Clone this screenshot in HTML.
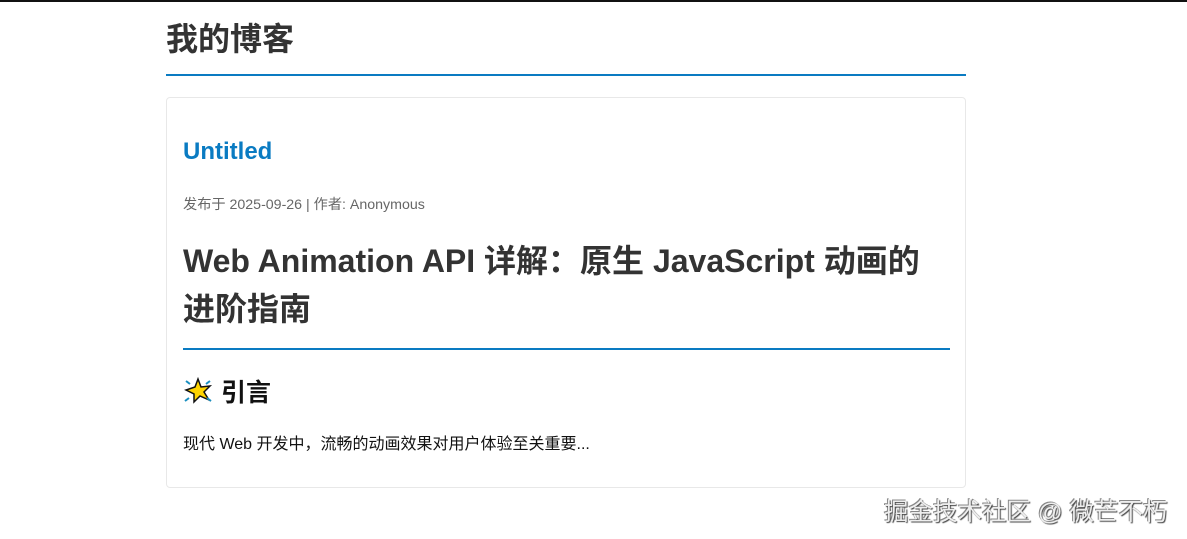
<!DOCTYPE html>
<html><head><meta charset="utf-8"><style>
body{margin:0;width:1187px;height:539px;background:#fff;font-family:"Liberation Sans","Noto Sans CJK SC",sans-serif;position:relative;overflow:hidden;border-top:2px solid #111;box-sizing:border-box}
.wrap{position:absolute;left:166px;top:0;width:800px}
h1{margin:0;position:absolute;top:17px;left:0;font-size:32px;font-weight:bold;color:#333;line-height:40px}
.line{position:absolute;top:72px;left:0;width:800px;height:2px;background:#0a7bc2}
.card{position:absolute;top:95px;left:0;width:798px;height:389px;border:1px solid #e8e8e8;border-radius:4px}
.t{position:absolute;left:16px;top:40px;font-size:24px;font-weight:bold;color:#0a7bc2}
.m{position:absolute;left:16px;top:96px;font-size:14.2px;color:#666}
.h{position:absolute;left:16px;top:139px;width:750px;font-size:32px;font-weight:bold;color:#333;line-height:48px}
.l2{position:absolute;left:16px;top:250px;width:767px;height:2px;background:#0a7bc2}
.s{position:absolute;left:16px;top:275px;font-size:25px;font-weight:bold;color:#111}
.p{position:absolute;left:16px;top:332px;font-size:16px;color:#111}
.wm{position:absolute;left:884px;top:491px;font-size:24.5px;color:#eee;text-shadow:1px 1px 1px #444,-1px -1px 0 #888}
</style></head><body>
<div class="wrap">
<h1>我的博客</h1>
<div class="line"></div>
<div class="card">
<div class="t">Untitled</div>
<div class="m">发布于 2025-09-26 | 作者: Anonymous</div>
<div class="h">Web Animation API 详解：原生 JavaScript 动画的进阶指南</div>
<div class="l2"></div>
<div class="s"><svg width="30" height="28" viewBox="0 0 30 28" style="vertical-align:-4px;margin-right:8px"><polygon points="15,2 18,10 27,9 21,15 26,23 17,19 11,25 11,17 3,13 12,10" fill="#ffd400" stroke="#111" stroke-width="1.5"/><path d="M3 4l4 3M27 4l-4 3M2 24l4-3M28 24l-4-3" stroke="#1a8fc0" stroke-width="2"/></svg>引言</div>
<div class="p">现代 Web 开发中，流畅的动画效果对用户体验至关重要...</div>
</div>
</div>
<div class="wm">掘金技术社区 @ 微芒不朽</div>
</body></html>
